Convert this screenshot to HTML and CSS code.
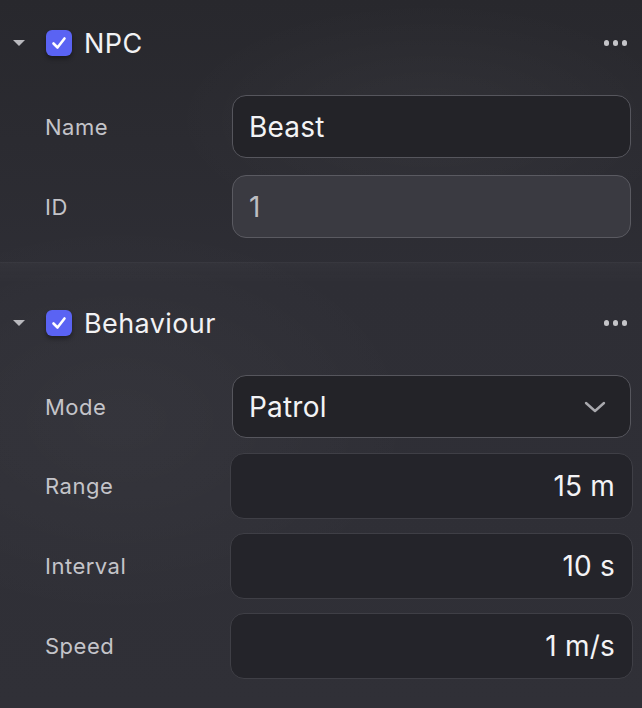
FILE: index.html
```html
<!DOCTYPE html>
<html>
<head>
<meta charset="utf-8">
<title>Inspector</title>
<link rel="stylesheet" href="styles.css">
</head>
<body>
<div class="inspector">
  <section class="component">
    <div class="comp-head">
      <span class="caret"></span>
      <span class="check"><svg viewBox="0 0 26 26" width="26" height="26"><path d="M7.5 13.5l4 4 7-9" fill="none" stroke="#fff" stroke-width="2.6" stroke-linecap="round" stroke-linejoin="round"/></svg></span>
      <span class="comp-title">NPC</span>
      <span class="more"><i></i><i></i><i></i></span>
    </div>
    <div class="field">
      <label>Name</label>
      <div class="input">Beast</div>
    </div>
    <div class="field">
      <label>ID</label>
      <div class="input disabled">1</div>
    </div>
  </section>

  <section class="component">
    <div class="comp-head">
      <span class="caret"></span>
      <span class="check"><svg viewBox="0 0 26 26" width="26" height="26"><path d="M7.5 13.5l4 4 7-9" fill="none" stroke="#fff" stroke-width="2.6" stroke-linecap="round" stroke-linejoin="round"/></svg></span>
      <span class="comp-title">Behaviour</span>
      <span class="more"><i></i><i></i><i></i></span>
    </div>
    <div class="field mode-field">
      <label>Mode</label>
      <div class="input select">Patrol
        <svg class="chev" viewBox="0 0 22 12" width="22" height="12"><path d="M2 2l9 8 9-8" fill="none" stroke="#a9a9ae" stroke-width="2.4" stroke-linecap="round" stroke-linejoin="round"/></svg>
      </div>
    </div>
    <div class="field num-field">
      <label>Range</label>
      <div class="input number">15 m</div>
    </div>
    <div class="field num-field">
      <label>Interval</label>
      <div class="input number">10 s</div>
    </div>
    <div class="field num-field">
      <label>Speed</label>
      <div class="input number">1 m/s</div>
    </div>
  </section>
</div>
</body>
</html>
```

FILE: styles.css
```css
html, body {
    margin: 0;
    padding: 0;
}
body {
    width: 642px;
    height: 708px;
    overflow: hidden;
    font-family: Inter, "Noto Sans", sans-serif;
    color: #ececef;
    background:
        radial-gradient(ellipse 260px 120px at 430px 120px, rgba(255,255,255,0.035), transparent),
        radial-gradient(ellipse 300px 200px at 120px 420px, rgba(255,255,255,0.03), transparent),
        linear-gradient(#28282d 0%, #2e2e35 40%, #303037 100%);
}

.component {
    padding: 30px 0 24px;
}
.component:first-child {
    padding-top: 13px;
}
.component + .component {
    border-top: 1px solid rgba(255,255,255,0.05);
    background: linear-gradient(rgba(255,255,255,0.025), transparent 20px);
}

.comp-head {
    display: flex;
    align-items: center;
    height: 60px;
    margin-bottom: 22px;
}
.caret {
    width: 0;
    height: 0;
    margin-left: 13px;
    border-left: 6.5px solid transparent;
    border-right: 6.5px solid transparent;
    border-top: 6px solid #b9b9be;
}
.check {
    display: flex;
    width: 26px;
    height: 26px;
    margin-left: 21px;
    border-radius: 6px;
    background: #5a63f3;
    box-shadow: 0 3px 4px rgba(0,0,0,0.35);
}
.comp-title {
    margin-left: 12px;
    font-size: 27px;
    letter-spacing: 0.4px;
    color: #f2f2f4;
}
.more {
    display: flex;
    gap: 3.5px;
    margin-left: auto;
    margin-right: 15px;
}
.more i {
    width: 5.5px;
    height: 5.5px;
    border-radius: 50%;
    background: #c4c4c8;
}

.field {
    display: flex;
    align-items: center;
    height: 63px;
    margin-bottom: 17px;
}
.field:last-child {
    margin-bottom: 0;
}
.field label {
    width: 187px;
    padding-left: 45px;
    font-size: 22px;
    letter-spacing: 0.5px;
    color: #c4c4c9;
}
.input {
    display: flex;
    align-items: center;
    box-sizing: border-box;
    width: 399px;
    height: 63px;
    padding: 0 16px;
    border: 1.5px solid #56565d;
    border-radius: 14px;
    background: #232328;
    font-size: 28px;
    letter-spacing: 0.2px;
    color: #f3f3f5;
}
.input.disabled {
    background: #3a3a41;
    border-color: #5a5a61;
    color: #bdbdc2;
}
.select {
    justify-content: space-between;
    padding-right: 24px;
}
.chev {
    display: block;
}

.field.mode-field {
    margin-bottom: 15px;
}
.field.num-field {
    height: 66px;
    margin-bottom: 14px;
}
.field.num-field:last-child {
    margin-bottom: 0;
}
.num-field label {
    width: 185px;
}
.input.number {
    width: 403px;
    height: 66px;
    justify-content: flex-end;
    padding-right: 17px;
    border: 1px solid #3f3f46;
    border-radius: 14px;
    background: #24242a;
}
```
